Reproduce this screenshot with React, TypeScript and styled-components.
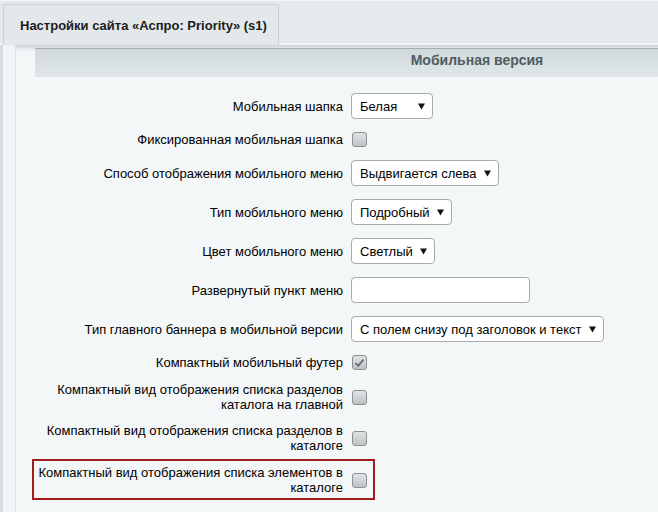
import React, { FC } from 'react';
import styled, { createGlobalStyle, css } from 'styled-components';

const GlobalStyle = createGlobalStyle`
  html, body {
    margin: 0;
    padding: 0;
    background: #e4eaec;
    overflow: hidden;
  }
  body {
    font-family: 'Liberation Sans', Arial, sans-serif;
    font-size: 13px;
    color: #000;
  }
`;

const Page = styled.div`
  width: 658px;
  height: 512px;
  overflow: hidden;
  display: flex;
  flex-direction: column;
`;

const TabBar = styled.div`
  display: flex;
  height: 45px;
  padding: 3px 0 0 3px;
  box-sizing: border-box;
  background: #e4eaec;
  border-top: 1px solid #f4f7f8;
  border-bottom: 2px solid #f2f6f7;
`;

const Tab = styled.div`
  display: flex;
  align-items: center;
  width: 276px;
  padding: 0 0 0 16px;
  box-sizing: border-box;
  margin-bottom: -2px;
  background: #e3e9eb;
  border: 1px solid #c9d1d4;
  border-bottom: none;
  border-radius: 3px 3px 0 0;
  font-weight: bold;
  font-size: 13px;
  color: #1c1c1c;
`;

const Frame = styled.div`
  flex: 1;
  display: flex;
  border-left: 3px solid #d5dde0;
  background: #f0f4f5;
`;

const Body = styled.div`
  flex: 1;
  margin-left: 12px;
  border-left: 1px solid #dbe2e4;
  background: linear-gradient(#c9d1d3 0, #e9eef0 4px, #f4f7f8 7px);
  padding-top: 3px;
`;

const SectionHeader = styled.div`
  width: 884px;
  height: 29px;
  margin-left: 19px;
  box-sizing: border-box;
  border-top: 1px solid #a3adb0;
  background: linear-gradient(#d2d9db, #e0e7e9);
  text-align: center;
  font-weight: bold;
  font-size: 14px;
  line-height: 22px;
  color: #4e5c61;
`;

const Form = styled.div`
  display: flex;
  flex-direction: column;
  padding-top: 9px;
`;

const Row = styled.div<{ $highlighted?: boolean }>`
  display: grid;
  grid-template-columns: 327px 1fr;
  column-gap: 8px;
  align-items: center;
  padding: 6px 0 5px;
  ${(p) =>
    p.$highlighted &&
    css`
      width: 343px;
      box-sizing: border-box;
      margin: 1px 0 0 16px;
      grid-template-columns: 309px 1fr;
      border: 2px solid #a21c1c;
      padding: 4px 0 3px;
    `}
`;

const Label = styled.div`
  text-align: right;
  line-height: 15px;
`;

const Control = styled.div`
  display: flex;
  align-items: center;
`;

const SelectBox = styled.div<{ $width: number }>`
  display: flex;
  align-items: center;
  justify-content: space-between;
  width: ${(p) => p.$width}px;
  height: 26px;
  margin: 1px 0;
  box-sizing: border-box;
  padding: 0 7px 0 8px;
  background: #fff;
  border: 1px solid #a8abad;
  border-radius: 4px;
  font-size: 13px;
  color: #000;
`;

const TextInput = styled.div`
  width: 179px;
  height: 26px;
  margin: 1px 0;
  box-sizing: border-box;
  background: #fff;
  border: 1px solid #a8abad;
  border-radius: 4px;
`;

const CheckBox = styled.span`
  display: flex;
  align-items: center;
  justify-content: center;
  width: 15px;
  height: 15px;
  margin: 1px 0 1px 1px;
  box-sizing: border-box;
  border: 1px solid #8e9193;
  border-radius: 3px;
  background: linear-gradient(#e2e3e4, #bfc1c3);
`;

const Arrow = () => (
  <svg width="7" height="7" viewBox="0 0 7 7">
    <path d="M0 0.5 H7 L3.5 6.5 Z" fill="#111" />
  </svg>
);

const Select: FC<{ width: number; value: string }> = ({ width, value }) => (
  <SelectBox $width={width}>
    <span>{value}</span>
    <Arrow />
  </SelectBox>
);

const Check: FC<{ checked?: boolean }> = ({ checked }) => (
  <CheckBox>
    {checked && (
      <svg width="11" height="10" viewBox="0 0 11 10">
        <path d="M1.5 5 L4.3 7.8 L9.5 1.5" fill="none" stroke="#5d6163" strokeWidth="1.6" />
      </svg>
    )}
  </CheckBox>
);

const App: FC = () => (
  <Page>
    <GlobalStyle />
    <TabBar>
      <Tab>Настройки сайта «Аспро: Priority» (s1)</Tab>
    </TabBar>
    <Frame>
      <Body>
        <SectionHeader>Мобильная версия</SectionHeader>
        <Form>
          <Row>
            <Label>Мобильная шапка</Label>
            <Control>
              <Select width={82} value="Белая" />
            </Control>
          </Row>
          <Row>
            <Label>Фиксированная мобильная шапка</Label>
            <Control>
              <Check />
            </Control>
          </Row>
          <Row>
            <Label>Способ отображения мобильного меню</Label>
            <Control>
              <Select width={148} value="Выдвигается слева" />
            </Control>
          </Row>
          <Row>
            <Label>Тип мобильного меню</Label>
            <Control>
              <Select width={101} value="Подробный" />
            </Control>
          </Row>
          <Row>
            <Label>Цвет мобильного меню</Label>
            <Control>
              <Select width={84} value="Светлый" />
            </Control>
          </Row>
          <Row>
            <Label>Развернутый пункт меню</Label>
            <Control>
              <TextInput />
            </Control>
          </Row>
          <Row>
            <Label>Тип главного баннера в мобильной версии</Label>
            <Control>
              <Select width={253} value="С полем снизу под заголовок и текст" />
            </Control>
          </Row>
          <Row>
            <Label>Компактный мобильный футер</Label>
            <Control>
              <Check checked />
            </Control>
          </Row>
          <Row>
            <Label>Компактный вид отображения списка разделов каталога на главной</Label>
            <Control>
              <Check />
            </Control>
          </Row>
          <Row>
            <Label>Компактный вид отображения списка разделов в каталоге</Label>
            <Control>
              <Check />
            </Control>
          </Row>
          <Row $highlighted>
            <Label>Компактный вид отображения списка элементов в каталоге</Label>
            <Control>
              <Check />
            </Control>
          </Row>
        </Form>
      </Body>
    </Frame>
  </Page>
);

export default App;
